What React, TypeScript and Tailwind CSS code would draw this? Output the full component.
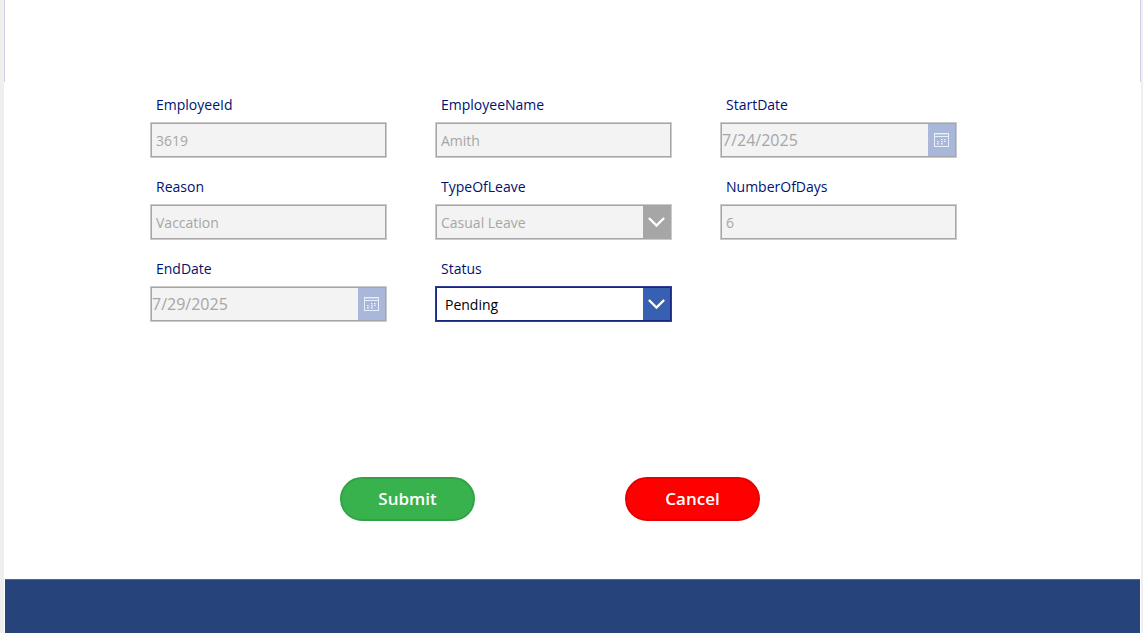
import type { ReactNode } from "react";

function Field({ id, label, children }: { id: string; label: string; children: ReactNode }) {
  return (
    <div className="flex min-w-0 flex-col gap-[7px]">
      <label htmlFor={id} className="pl-[6px] text-[14px] leading-5 text-[#001270]">
        {label}
      </label>
      {children}
    </div>
  );
}

const disabledBox = "h-9 w-full border border-[#cbcbcb] bg-[#f3f3f3] inset-ring inset-ring-[#a6a6a6]";

function TextField({ id, label, value }: { id: string; label: string; value: string }) {
  return (
    <Field id={id} label={label}>
      <input
        id={id}
        type="text"
        defaultValue={value}
        disabled
        className={`${disabledBox} px-[5px] text-[14px] text-[#a6a6a6]`}
      />
    </Field>
  );
}

function CalendarIcon() {
  return (
    <svg width="15" height="14" viewBox="0 0 15 14" fill="none" aria-hidden="true">
      <rect x="0.5" y="0.5" width="14" height="13" stroke="#e9eef8" />
      <path d="M1 1h13v1H1z" fill="#e9eef8" fillOpacity="0.4" />
      <path d="M1 3.5h13" stroke="#e9eef8" />
      <path
        d="M3 8h1v1H3zM3 10h1v1H3zM7 6h1v1H7zM7 8h1v1H7zM7 10h1v1H7zM10 6h1v1h-1zM10 8h1v1h-1z"
        fill="#f4f7fc"
      />
      <path d="M4 8h1v3H4zM8 6h1v5H8zM11 6h1v3h-1zM3 11h2v1H3zM7 11h2v1H7z" fill="#e9eef8" fillOpacity="0.45" />
    </svg>
  );
}

function DateField({ id, label, value }: { id: string; label: string; value: string }) {
  return (
    <Field id={id} label={label}>
      <div className={`${disabledBox} flex p-px`}>
        <input
          id={id}
          type="text"
          defaultValue={value}
          disabled
          className="min-w-0 flex-1 text-[16px] text-[#a6a6a6]"
        />
        <button
          type="button"
          disabled
          aria-label={`Pick ${label}`}
          className="flex w-[27px] items-center justify-center bg-[#a9b8da]"
        >
          <CalendarIcon />
        </button>
      </div>
    </Field>
  );
}

function Chevron() {
  return (
    <svg width="17" height="10" viewBox="0 0 17 10" fill="none" aria-hidden="true">
      <path d="M0.9 1 8.5 8.5 16.1 1" stroke="#fff" strokeWidth="2.4" />
    </svg>
  );
}

export default function App() {
  return (
    <div className="flex min-h-screen flex-col bg-[#efefef] pr-[2px] pl-1 font-['Open_Sans',sans-serif]">
      <div className="flex flex-1 flex-col bg-white">
        <header className="h-[82px] border-x border-[#cfd3ea]" />
        <main className="flex-1 pt-[13px] pr-[184px] pb-[58px] pl-[146px]">
          <form className="flex flex-col">
            <div className="grid grid-cols-3 gap-x-12 gap-y-[19px]">
              <TextField id="employee-id" label="EmployeeId" value="3619" />
              <TextField id="employee-name" label="EmployeeName" value="Amith" />
              <DateField id="start-date" label="StartDate" value="7/24/2025" />
              <TextField id="reason" label="Reason" value="Vaccation" />
              <Field id="type-of-leave" label="TypeOfLeave">
                <div className={`${disabledBox} grid grid-cols-1 grid-rows-1 p-px`}>
                  <select
                    id="type-of-leave"
                    disabled
                    className="col-start-1 row-start-1 appearance-none pl-1 text-[14px] text-[#a6a6a6] opacity-100"
                  >
                    <option>Casual Leave</option>
                  </select>
                  <span className="pointer-events-none col-start-1 row-start-1 flex w-[27px] items-center justify-center justify-self-end bg-[#a6a6a6]">
                    <Chevron />
                  </span>
                </div>
              </Field>
              <TextField id="number-of-days" label="NumberOfDays" value="6" />
              <DateField id="end-date" label="EndDate" value="7/29/2025" />
              <Field id="status" label="Status">
                <div className="grid h-9 grid-cols-1 grid-rows-1 border border-[#333d94] bg-white p-px inset-ring inset-ring-[#1a2780]">
                  <select
                    id="status"
                    className="col-start-1 row-start-1 appearance-none pl-2 text-[14px] text-black"
                  >
                    <option>Pending</option>
                    <option>Approved</option>
                    <option>Rejected</option>
                  </select>
                  <span className="pointer-events-none col-start-1 row-start-1 flex w-[27px] items-center justify-center justify-self-end bg-[#3860b2]">
                    <Chevron />
                  </span>
                </div>
              </Field>
            </div>
            <div className="mt-[155px] flex gap-[150px] pl-[190px]">
              <button
                type="submit"
                className="h-11 w-[135px] rounded-full border-2 border-[#33a246] bg-[#38b24d] text-[17px] font-semibold text-white"
              >
                Submit
              </button>
              <button
                type="button"
                className="h-11 w-[135px] rounded-full border-2 border-[#e60000] bg-[#ff0000] text-[17px] font-semibold text-white"
              >
                Cancel
              </button>
            </div>
          </form>
        </main>
        <footer className="mx-px h-[54px] border-t border-[#4c659a] bg-[#26437c]" />
      </div>
    </div>
  );
}
